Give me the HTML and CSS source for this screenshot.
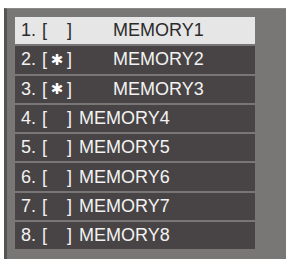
FILE: index.html
```html
<!DOCTYPE html>
<html lang="en">
<head>
<meta charset="UTF-8">
<title>Memory list</title>
<link rel="stylesheet" href="styles.css">
</head>
<body>
<div class="panel">
    <div class="list">
        <div class="row selected">
            <span class="num">1.</span><span class="slot">[<span class="mark"></span>]</span><span class="name wide">MEMORY1</span>
        </div>
        <div class="row">
            <span class="num">2.</span><span class="slot">[<span class="mark">&#x2731;</span>]</span><span class="name wide">MEMORY2</span>
        </div>
        <div class="row">
            <span class="num">3.</span><span class="slot">[<span class="mark">&#x2731;</span>]</span><span class="name wide">MEMORY3</span>
        </div>
        <div class="row">
            <span class="num">4.</span><span class="slot">[<span class="mark"></span>]</span><span class="name">MEMORY4</span>
        </div>
        <div class="row">
            <span class="num">5.</span><span class="slot">[<span class="mark"></span>]</span><span class="name">MEMORY5</span>
        </div>
        <div class="row">
            <span class="num">6.</span><span class="slot">[<span class="mark"></span>]</span><span class="name">MEMORY6</span>
        </div>
        <div class="row">
            <span class="num">7.</span><span class="slot">[<span class="mark"></span>]</span><span class="name">MEMORY7</span>
        </div>
        <div class="row">
            <span class="num">8.</span><span class="slot">[<span class="mark"></span>]</span><span class="name">MEMORY8</span>
        </div>
    </div>
</div>
</body>
</html>
```

FILE: styles.css
```css
body {
    margin: 0;
    background-color: #ffffff;
    font-family: "Liberation Sans", Arial, sans-serif;
}

.panel {
    margin: 8px 0 0 4px;
    width: 282px;
    height: 251px;
    box-sizing: border-box;
    background-color: #797676;
    border-left: 3px solid #555353;
    border-top: 1px solid #8a8888;
    padding: 8px 31px 0 8px;
}

.list {
    display: flex;
    flex-direction: column;
    gap: 2px;
}

.row {
    display: flex;
    align-items: center;
    height: 27.3px;
    padding-left: 6px;
    background-color: #484445;
    color: #f2f2f2;
    font-size: 18px;
    white-space: nowrap;
}

.row.selected {
    background-color: #e6e6e6;
    color: #2b2b2b;
}

.num {
    display: inline-block;
    width: 21px;
}

.slot {
    display: inline-flex;
    align-items: center;
}

.mark {
    display: inline-block;
    width: 20px;
    text-align: center;
    font-family: "DejaVu Sans", sans-serif;
    font-size: 15px;
    font-weight: bold;
    color: #ffffff;
}

.name {
    margin-left: 7px;
}

.name.wide {
    margin-left: 41px;
}
```
